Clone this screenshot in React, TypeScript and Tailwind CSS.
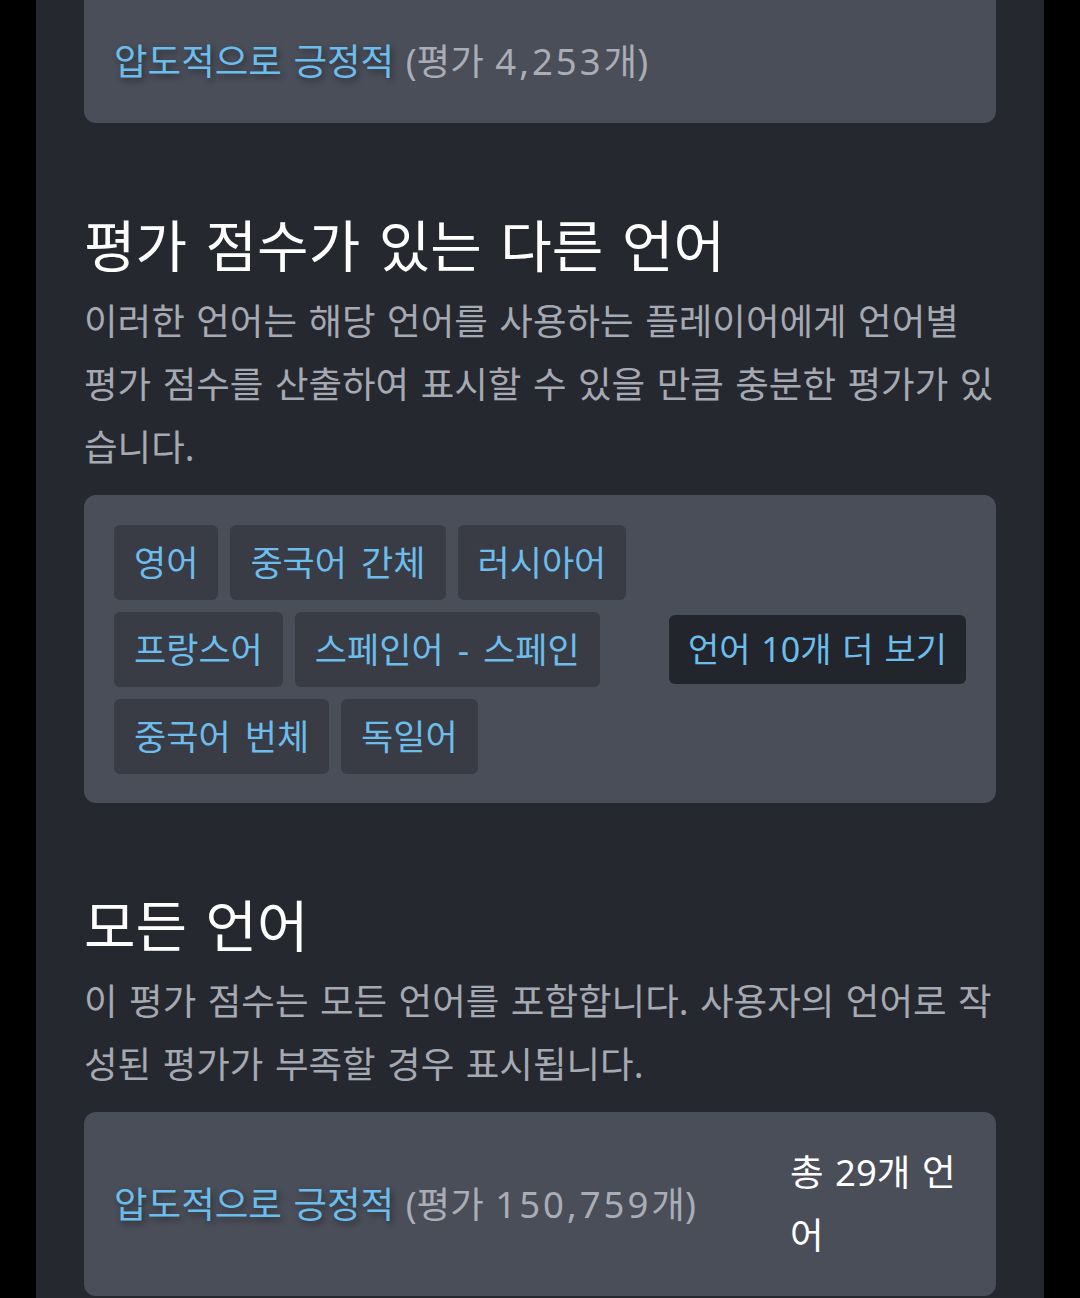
import React from "react";

const font = { fontFamily: '"Noto Sans", "Noto Sans CJK KR", sans-serif' };

function Chip({ label }: { label: string }) {
  return (
    <div className="rounded-md bg-[#393c45] px-5 py-[9px] text-[35px] leading-[57px] text-[#6cbdec] [word-spacing:5px]">
      {label}
    </div>
  );
}

function Rating({ count }: { count: string }) {
  return (
    <>
      <span className="text-[#6cbdec] [text-shadow:2px_3px_6px_rgba(0,0,0,0.45)]">압도적으로 긍정적</span>{" "}
      <span className="text-[#a9adb5]">
        (평가 <span className="tracking-[3px]">{count}</span>개)
      </span>
    </>
  );
}

export default function App() {
  const chips = ["영어", "중국어 간체", "러시아어", "프랑스어", "스페인어 - 스페인", "중국어 번체", "독일어"];
  return (
    <div className="min-h-[1298px] w-full bg-black" style={font}>
      <div className="mx-auto min-h-[1298px] w-[1008px] bg-[#262830] px-12 pb-10 [word-spacing:2px]">
        {/* top card */}
        <div className="rounded-b-xl bg-[#4a4e59] px-[30px] py-[30px] text-[36.5px] leading-[63px]">
          <Rating count="4,253" />
        </div>

        {/* other languages */}
        <h2 className="mt-[92px] mb-[15px] text-[56px] font-normal leading-[60px] text-white [word-spacing:4px]">
          평가 점수가 있는 다른 언어
        </h2>
        <p className="mb-[16px] text-[36.5px] leading-[63px] text-[#a5a9b1]">
          이러한 언어는 해당 언어를 사용하는 플레이어에게 언어별 평가 점수를 산출하여 표시할 수 있을 만큼 충분한 평가가 있습니다.
        </p>
        <div className="flex items-center rounded-xl bg-[#4a4e59] px-[30px] pt-[30px] pb-[29px]">
          <div className="flex w-[530px] shrink-0 flex-wrap gap-3">
            {chips.map((c) => (
              <Chip key={c} label={c} />
            ))}
          </div>
          <div className="ml-auto rounded-md bg-[#22252b] px-[19px] py-2 text-[34px] leading-[53px] text-[#6cbdec]">
            언어 10개 더 보기
          </div>
        </div>

        {/* all languages */}
        <h2 className="mt-[92px] mb-[15px] text-[56px] font-normal leading-[60px] text-white [word-spacing:4px]">
          모든 언어
        </h2>
        <p className="mb-[16px] text-[36.5px] leading-[63px] text-[#a5a9b1]">
          이 평가 점수는 모든 언어를 포함합니다. 사용자의 언어로 작성된 평가가 부족할 경우 표시됩니다.
        </p>
        <div className="flex items-center justify-between rounded-xl bg-[#4a4e59] px-[30px] py-[29px] text-[36.5px] leading-[63px]">
          <div>
            <Rating count="150,759" />
          </div>
          <div className="w-[176px] text-white">총 29개 언어</div>
        </div>
      </div>
    </div>
  );
}
